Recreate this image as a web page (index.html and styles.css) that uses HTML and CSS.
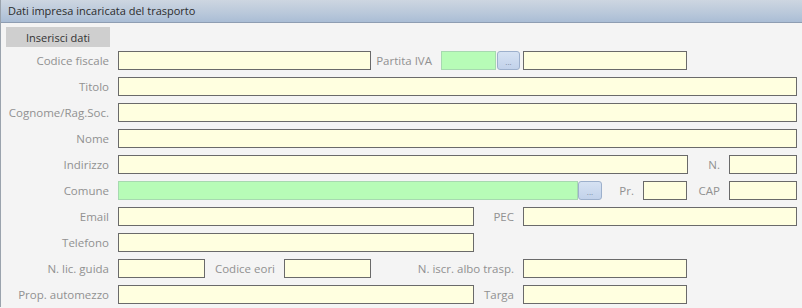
FILE: index.html
```html
<!DOCTYPE html>
<html>
<head>
<meta charset="utf-8">
<link rel="stylesheet" href="styles.css">
</head>
<body>
<div class="panel">
  <div class="header">Dati impresa incaricata del trasporto</div>
  <div class="content">
    <div class="btn-row"><button class="btn">Inserisci dati</button></div>
    <div class="row">
      <span class="lbl main">Codice fiscale</span>
      <span class="in w253"></span>
      <span class="lbl l70">Partita IVA</span>
      <span class="in green w55"></span>
      <span class="dots b1">...</span>
      <span class="in w164 ml3"></span>
    </div>
    <div class="row">
      <span class="lbl main">Titolo</span>
      <span class="in wfull"></span>
    </div>
    <div class="row">
      <span class="lbl main">Cognome/Rag.Soc.</span>
      <span class="in wfull"></span>
    </div>
    <div class="row">
      <span class="lbl main">Nome</span>
      <span class="in wfull"></span>
    </div>
    <div class="row">
      <span class="lbl main">Indirizzo</span>
      <span class="in w570"></span>
      <span class="lbl l41">N.</span>
      <span class="in w68"></span>
    </div>
    <div class="row">
      <span class="lbl main">Comune</span>
      <span class="in green w460"></span>
      <span class="dots b0">...</span>
      <span class="lbl l41">Pr.</span>
      <span class="in w44"></span>
      <span class="lbl l42">CAP</span>
      <span class="in w68"></span>
    </div>
    <div class="row">
      <span class="lbl main">Email</span>
      <span class="in w356"></span>
      <span class="lbl l49">PEC</span>
      <span class="in w274"></span>
    </div>
    <div class="row">
      <span class="lbl main">Telefono</span>
      <span class="in w356"></span>
    </div>
    <div class="row">
      <span class="lbl main">N. lic. guida</span>
      <span class="in w87"></span>
      <span class="lbl l79">Codice eori</span>
      <span class="in w87"></span>
      <span class="lbl l152">N. iscr. albo trasp.</span>
      <span class="in w164"></span>
    </div>
    <div class="row">
      <span class="lbl main">Prop. automezzo</span>
      <span class="in w356"></span>
      <span class="lbl l49">Targa</span>
      <span class="in w164"></span>
    </div>
  </div>
</div>
</body>
</html>
```
FILE: styles.css
```css
html, body {
  margin: 0;
  padding: 0;
  background: #f4f4f4;
}
body {
  width: 802px;
  height: 308px;
  overflow: hidden;
  font-family: "Open Sans", "Noto Sans", sans-serif;
  font-size: 11px;
}
.panel {
  border-left: 1px solid #9aa3ad;
  height: 308px;
  box-sizing: border-box;
}
.header {
  height: 22px;
  line-height: 22px;
  padding-left: 7px;
  color: #2c2c2c;
  background: linear-gradient(to bottom, #cdd6e1 0%, #b9c8da 60%, #aabdd5 100%);
  border-top: 1px solid #9aa3ad;
  border-bottom: 1px solid #8e9db2;
  box-sizing: content-box;
  margin-top: -1px;
}
.content {
  padding-top: 4px;
}
.btn-row {
  display: flex;
  padding-left: 5px;
  height: 20px;
  margin-bottom: 4px;
}
.btn {
  width: 104px;
  height: 20px;
  border: none;
  background: #cfcfcf;
  color: #333;
  font-family: inherit;
  font-size: 11px;
  padding: 0;
  margin: 0;
}
.row {
  display: flex;
  align-items: center;
  height: 19px;
  margin-bottom: 7px;
}
.lbl {
  color: #919191;
  font-size: 11.5px;
  text-align: right;
  box-sizing: border-box;
  padding-right: 9px;
  white-space: nowrap;
  flex: none;
}
.main {
  width: 117px;
}
.l70 { width: 70px; }
.l41 { width: 41px; }
.l42 { width: 42px; }
.l49 { width: 49px; }
.l79 { width: 79px; }
.l152 { width: 152px; }
.in {
  display: block;
  height: 19px;
  box-sizing: border-box;
  border: 1px solid #6a6a6a;
  background: #ffffe0;
  flex: none;
}
.in.green {
  background: #b7fcb7;
  border-color: #a7d9b0;
}
.dots {
  display: flex;
  align-items: center;
  justify-content: center;
  width: 23px;
  height: 19px;
  box-sizing: border-box;
  border: 1px solid #9db0cc;
  border-radius: 3px;
  background: linear-gradient(to bottom, #d6e2f3, #c2d2ea);
  color: #7a8aa0;
  font-size: 8px;
  line-height: 1;
  padding-top: 3px;
  flex: none;
}
.b1 { margin-left: 1px; }
.b0 { width: 24px; }
.ml3 { margin-left: 3px; }
.wfull { width: 679px; }
.w253 { width: 253px; }
.w55 { width: 55px; }
.w164 { width: 164px; }
.w570 { width: 570px; }
.w68 { width: 68px; }
.w460 { width: 460px; }
.w44 { width: 44px; }
.w356 { width: 356px; }
.w274 { width: 274px; }
.w87 { width: 87px; }
```
